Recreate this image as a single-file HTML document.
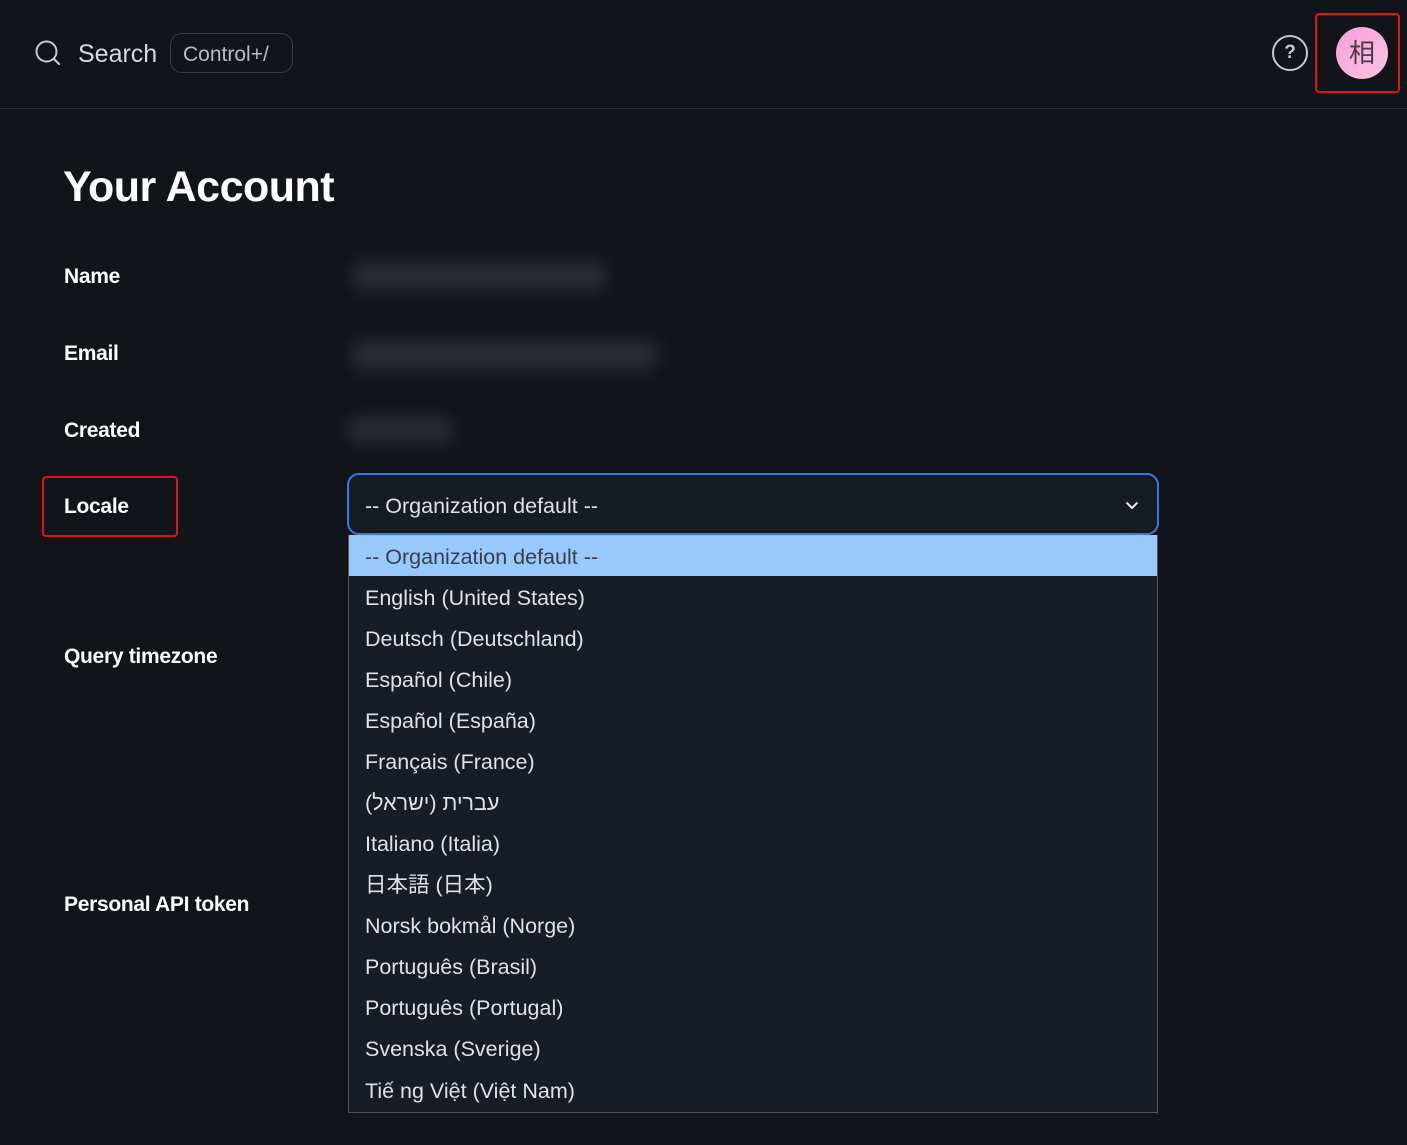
<!DOCTYPE html>
<html><head><meta charset="utf-8"><style>
*{box-sizing:border-box;margin:0;padding:0}
body{width:1407px;height:1145px;background:#111419;font-family:"Liberation Sans","Noto Sans CJK JP",sans-serif;color:#e8eaed;position:relative;overflow:hidden}
.abs{position:absolute}
.hdr{left:0;top:0;width:1407px;height:109px;border-bottom:1px solid #30343b}
.lbl{position:absolute;left:64px;font-size:21px;font-weight:bold;color:#fff;letter-spacing:-0.3px}
.blur{position:absolute;background:#2a2d33;filter:blur(8px);border-radius:10px}
.sel{left:347px;top:473px;width:812px;height:62px;border:2px solid #3b78e7;border-radius:12px;background:#171b22;font-size:21.5px;color:#dfe2e6;padding:19px 0 0 16px}
.list{left:348px;top:535px;width:810px;height:578px;background:#181c24;border:1px solid #50545b;border-top:none}
.it{height:41px;line-height:45px;padding-left:16px;font-size:21.5px;color:#dfe2e6;white-space:nowrap}
.red{position:absolute;border:2px solid #e0121b;border-radius:4px}
</style></head><body>
<div class="abs hdr"></div>
<svg class="abs" style="left:34px;top:39px" width="28" height="28" viewBox="0 0 28 28"><circle cx="12.5" cy="12.5" r="10" fill="none" stroke="#c5c8cc" stroke-width="2"/><line x1="20" y1="20" x2="25" y2="25" stroke="#c5c8cc" stroke-width="2.2" stroke-linecap="round"/></svg>
<div class="abs" style="left:78px;top:40px;font-size:25px;color:#d6d9dd">Search</div>
<div class="abs" style="left:170px;top:33px;width:123px;height:40px;border:1px solid #3a3e45;border-radius:12px;font-size:21px;color:#b9bcc1;padding:9px 0 0 12px">Control+/</div>
<div class="abs" style="left:1272px;top:35px;width:36px;height:36px;border:2.5px solid #c5c8cc;border-radius:50%;text-align:center;font-size:19px;font-weight:bold;line-height:31px;color:#c5c8cc">?</div>
<div class="red" style="left:1315px;top:13px;width:85px;height:80px"></div>
<div class="abs" style="left:1336px;top:27px;width:52px;height:52px;border-radius:50%;background:linear-gradient(135deg,#f79fd9,#fbc3e3);text-align:center;line-height:52px;font-size:26px;color:#4a3a44">相</div>
<div class="abs" style="left:63px;top:163px;font-size:43px;font-weight:bold;color:#fff;letter-spacing:-0.5px">Your Account</div>
<div class="lbl" style="top:265px">Name</div>
<div class="lbl" style="top:342px">Email</div>
<div class="lbl" style="top:419px">Created</div>
<div class="lbl" style="top:495px">Locale</div>
<div class="red" style="left:42px;top:476px;width:136px;height:61px"></div>
<div class="lbl" style="top:645px">Query timezone</div>
<div class="lbl" style="top:893px">Personal API token</div>
<div class="blur" style="left:352px;top:262px;width:255px;height:28px"></div>
<div class="blur" style="left:352px;top:340px;width:305px;height:30px"></div>
<div class="blur" style="left:348px;top:417px;width:105px;height:26px"></div>
<div class="abs sel">-- Organization default --
<svg class="abs" style="right:18px;top:25px" width="14" height="10" viewBox="0 0 14 10"><path d="M1.5 2.5 L7 8 L12.5 2.5" fill="none" stroke="#e8eaed" stroke-width="2"/></svg></div>
<div class="abs list">
<div class="it" style="background:#99c8fc;color:#3a3f47">-- Organization default --</div>
<div class="it">English (United States)</div>
<div class="it">Deutsch (Deutschland)</div>
<div class="it">Español (Chile)</div>
<div class="it">Español (España)</div>
<div class="it">Français (France)</div>
<div class="it">(עברית (ישראל</div>
<div class="it">Italiano (Italia)</div>
<div class="it">日本語 (日本)</div>
<div class="it">Norsk bokmål (Norge)</div>
<div class="it">Português (Brasil)</div>
<div class="it">Português (Portugal)</div>
<div class="it">Svenska (Sverige)</div>
<div class="it" style="height:45px;line-height:47px">Tiế ng Việt (Việt Nam)</div>
</div>
</body></html>
